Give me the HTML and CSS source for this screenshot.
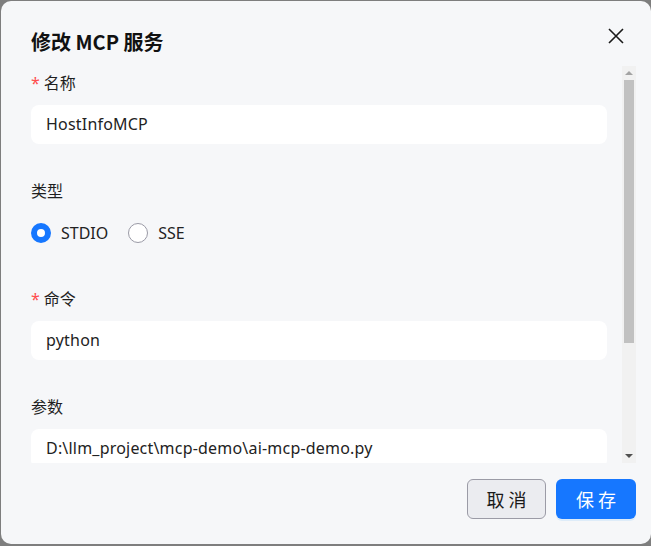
FILE: index.html
```html
<!DOCTYPE html>
<html lang="zh-CN">
<head>
<meta charset="utf-8">
<title>修改 MCP 服务</title>
<link rel="stylesheet" href="styles.css">
</head>
<body>
<div class="dialog">
  <div class="header">
    <h1 class="title">修改 MCP 服务</h1>
    <button class="close" aria-label="关闭">
      <svg width="16" height="16" viewBox="0 0 16 16"><path d="M1 1L15 15M15 1L1 15" stroke="#1a1a1a" stroke-width="1.6" fill="none"/></svg>
    </button>
  </div>
  <div class="body">
    <div class="scroll">
      <div class="item">
        <div class="label"><span class="req">*</span>名称</div>
        <div class="input">HostInfoMCP</div>
      </div>
      <div class="item">
        <div class="label">类型</div>
        <div class="radios">
          <label class="radio"><span class="dot checked"></span>STDIO</label>
          <label class="radio"><span class="dot"></span>SSE</label>
        </div>
      </div>
      <div class="item">
        <div class="label"><span class="req">*</span>命令</div>
        <div class="input">python</div>
      </div>
      <div class="item">
        <div class="label">参数</div>
        <div class="input">D:\llm_project\mcp-demo\ai-mcp-demo.py</div>
      </div>
    </div>
    <div class="scrollbar">
      <div class="arrow up"></div>
      <div class="track"><div class="thumb"></div></div>
      <div class="arrow down"></div>
    </div>
  </div>
  <div class="footer">
    <button class="btn cancel">取消</button>
    <button class="btn primary">保存</button>
  </div>
</div>
</body>
</html>
```
FILE: styles.css
```css
* { box-sizing: border-box; }
html, body { margin: 0; padding: 0; }
body {
  background: #7e7e7e;
  padding: 1px 0 2px 1px;
  font-family: "Noto Sans", "Noto Sans CJK SC", sans-serif;
  color: #1f1f1f;
  overflow: hidden;
}
.dialog {
  width: 650px;
  height: 543px;
  background: #f6f7f9;
  border-radius: 10px;
  display: flex;
  flex-direction: column;
}
.header {
  display: flex;
  justify-content: space-between;
  align-items: flex-start;
  padding: 27px 27px 0 30px;
  height: 65px;
}
.title {
  margin: 0;
  font-size: 20px;
  line-height: 28px;
  font-weight: 700;
  color: #111;
  font-family: "Noto Sans CJK SC", sans-serif;
}
.close {
  border: 0;
  background: none;
  padding: 0;
  margin: 0;
  width: 16px;
  height: 16px;
  display: block;
}
.close svg { display: block; }
.body {
  display: flex;
  gap: 15px;
  padding: 0 15px 0 30px;
  height: 397px;
}
.scroll {
  flex: 1;
  overflow: hidden;
  padding-top: 4px;
}
.item { margin-bottom: 34px; }
.label {
  font-size: 16px;
  line-height: 24px;
  height: 24px;
  margin-bottom: 11px;
  font-family: "Noto Sans CJK SC", sans-serif;
  color: #1f1f1f;
}
.req {
  color: #ff4d4f;
  margin-right: 4px;
  font-family: "Noto Sans", sans-serif;
}
.input {
  height: 39px;
  background: #fff;
  border-radius: 8px;
  padding: 0 15px;
  font-size: 16px;
  line-height: 39px;
  color: #222;
  white-space: nowrap;
  letter-spacing: 0.2px;
}
.radios {
  display: flex;
  align-items: center;
  height: 39px;
  gap: 20px;
}
.radio {
  display: flex;
  align-items: center;
  gap: 10px;
  font-size: 16px;
  color: #222;
}
.dot {
  width: 20px;
  height: 20px;
  border-radius: 50%;
  background: #fff;
  border: 1px solid #9a9aa6;
}
.dot.checked {
  border: 6px solid #1677ff;
}
.scrollbar {
  width: 14px;
  display: flex;
  flex-direction: column;
  background: #f1f1f1;
}
.arrow {
  height: 14px;
  display: flex;
  align-items: center;
  justify-content: center;
}
.arrow.up::before {
  content: "";
  border-left: 4px solid transparent;
  border-right: 4px solid transparent;
  border-bottom: 4px solid #a3a3a3;
}
.arrow.down::before {
  content: "";
  border-left: 4px solid transparent;
  border-right: 4px solid transparent;
  border-top: 4px solid #505050;
}
.track {
  flex: 1;
  padding: 0 2px;
}
.thumb {
  height: 263px;
  background: #c1c1c1;
}
.footer {
  display: flex;
  justify-content: flex-end;
  gap: 10px;
  padding: 16px 15px 0 0;
}
.btn {
  height: 40px;
  width: 79px;
  border-radius: 6px;
  font-size: 18px;
  letter-spacing: 4px;
  text-indent: 4px;
  font-family: "Noto Sans CJK SC", sans-serif;
  cursor: pointer;
}
.cancel {
  background: #ebecf0;
  border: 1px solid #9b9ba6;
  color: #1a1a1a;
}
.primary {
  width: 80px;
  background: #1677ff;
  border: 0;
  color: #fff;
  box-shadow: 0 2px 0 rgba(5, 145, 255, 0.1);
}
```
